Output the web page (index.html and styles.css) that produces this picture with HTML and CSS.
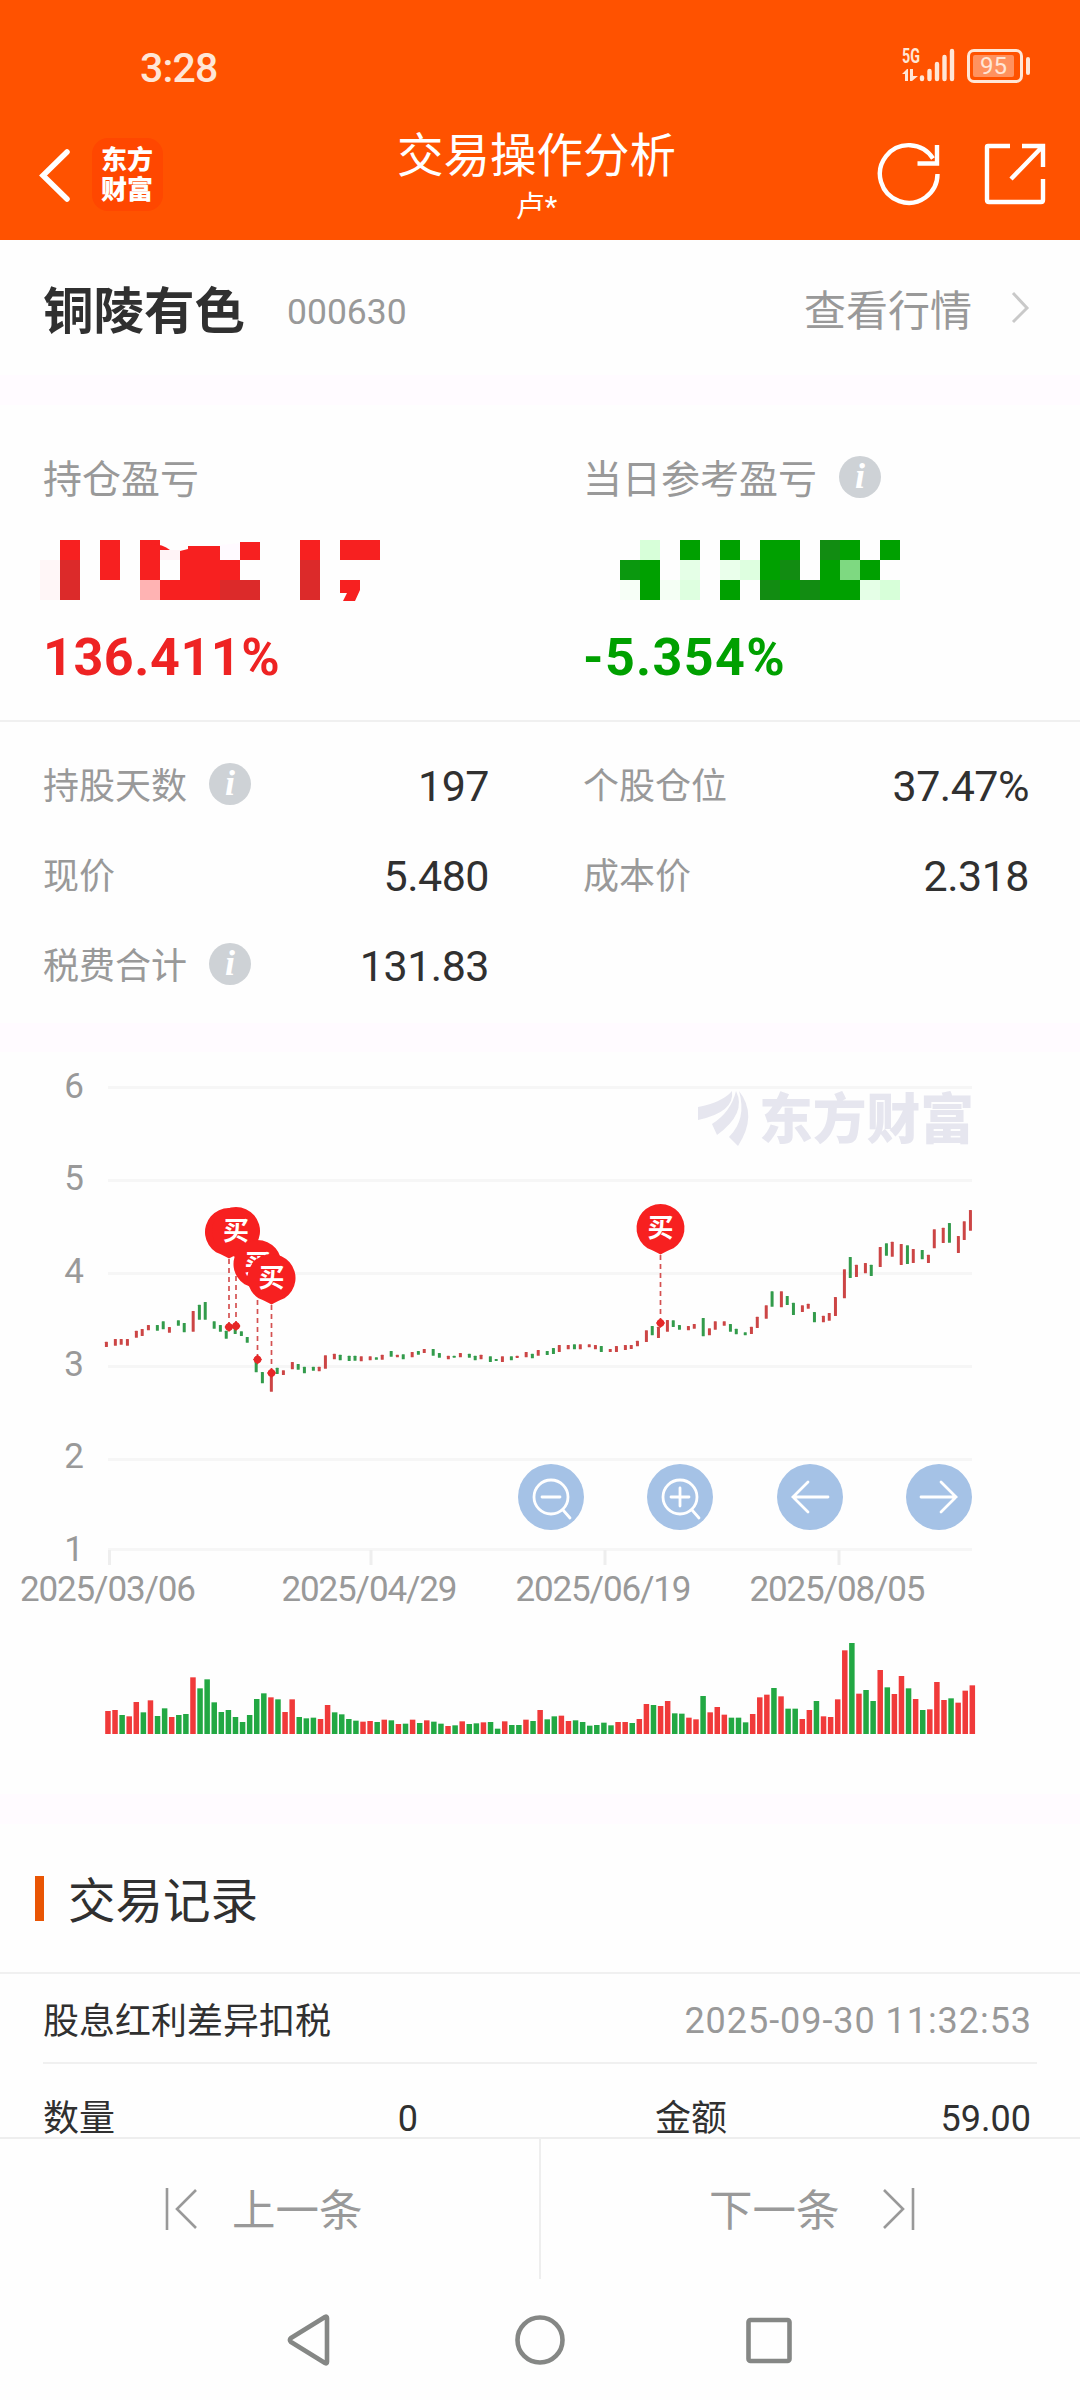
FILE: index.html
```
<!DOCTYPE html>
<html lang="zh-CN">
	<head>
		<meta charset="utf-8">
		<title>交易操作分析</title>
		<link rel="stylesheet" href="styles.css">
	</head>
	<body>
		<div class="page">
			<header class="header">
				<div class="status">
					<span class="time">3:28</span>
					<div class="status-right">
						<div class="net">
							<span>5G</span>
							<svg width="16" height="12" viewBox="0 0 16 12"><path d="M0 5 5 0H6V12H3V5ZM8 0H11V7H16L10 12H8Z" fill="#ffe6d6"/></svg>
						</div>
						<svg class="signal" width="36" height="34" viewBox="0 0 36 34" stroke="#ffe6d6" stroke-width="4.4" stroke-linecap="round"><path d="M3 29.500V31M10.500 23V31M18 16V31M25.500 9V31M33 3V31"/></svg>
						<div class="battery"><span>95</span></div>
						<i class="battery-cap"></i>
					</div>
				</div>
				<div class="nav">
					<svg class="back" width="34" height="56" viewBox="0 0 34 56"><path d="M29 4 5 27.500 29 51" fill="none" stroke="#fff" stroke-width="5.500" stroke-linecap="round"/></svg>
					<div class="logo">东方<br>财富</div>
					<div class="title">
						<h1>交易操作分析</h1>
						<p>卢*</p>
					</div>
					<svg class="refresh" width="66" height="66" viewBox="0 0 66 66" fill="none" stroke="#fff" stroke-width="4.400"><path d="M60.500 33A28.800 28.800 0 1 1 56 17.500"/><path d="M60 4V22.500H40.500"/></svg>
					<svg class="share" width="62" height="62" viewBox="0 0 62 62" fill="none" stroke="#fff" stroke-width="4.400"><path d="M26 3H4Q3 3 3 4V57Q3 59 5 59H57Q59 59 59 57V36M38 3H59V24M59 3 27 36"/></svg>
				</div>
			</header>

			<section class="stock">
				<h2>铜陵有色</h2>
				<span class="code">000630</span>
				<span class="quote">查看行情</span>
				<svg width="20" height="36" viewBox="0 0 20 36"><path d="M2 3 16 18 2 32" fill="none" stroke="#c9c9c9" stroke-width="3"/></svg>
			</section>

			<section class="profit">
				<div class="profit-item red">
					<p class="label">持仓盈亏</p>
					<svg class="mosaic" id="mosaicRed" width="360" height="62"></svg>
					<b>136.411%</b>
				</div>
				<div class="profit-item green">
					<p class="label">当日参考盈亏<i class="info">i</i></p>
					<svg class="mosaic" id="mosaicGreen" width="360" height="62"></svg>
					<b>-5.354%</b>
				</div>
			</section>

			<section class="detail">
				<div class="row"><span>持股天数<i class="info">i</i></span><em>197</em></div>
				<div class="row"><span>个股仓位</span><em>37.47%</em></div>
				<div class="row"><span>现价</span><em>5.480</em></div>
				<div class="row"><span>成本价</span><em>2.318</em></div>
				<div class="row"><span>税费合计<i class="info">i</i></span><em>131.83</em></div>
			</section>

			<section class="chart">
				<svg id="chart" width="1080" height="742" viewBox="0 1052 1080 742"></svg>
			</section>

			<section class="record">
				<h3>交易记录</h3>
				<div class="record-head"><span>股息红利差异扣税</span><time>2025-09-30 11:32:53</time></div>
				<div class="record-row">
					<span>数量</span><em class="count">0</em>
					<span class="amount">金额</span><em>59.00</em>
				</div>
			</section>

			<div class="pager">
				<div class="prev">
					<svg width="34" height="46" viewBox="0 0 34 46" fill="none" stroke="#999" stroke-width="2.600"><path d="M3 2V44M32 4 13 23 32 42"/></svg>
					<span>上一条</span>
				</div>
				<div class="next">
					<span>下一条</span>
					<svg width="34" height="46" viewBox="0 0 34 46" fill="none" stroke="#999" stroke-width="2.600"><path d="M31 2V44M2 4 21 23 2 42"/></svg>
				</div>
			</div>

			<div class="sysbar">
				<svg width="1080" height="122" viewBox="0 0 1080 122" fill="none" stroke="#858785" stroke-width="4.600" stroke-linejoin="round"><path d="M327 39V83Q327 85 325 84L291 63Q289 61 291 59L325 38Q327 37 327 39Z"/><circle cx="540" cy="61" r="22.500"/><rect x="748.500" y="41" width="41" height="41" rx="2"/></svg>
			</div>
		</div>
		<script src="chart.js"></script>
	</body>
</html>
```
FILE: styles.css
```
*{
	margin: 0;
	padding: 0;
	box-sizing: border-box;
}
body{
	width: 1080px;
	background-color: #fefefe;
	color: #303030;
	font-family: "Roboto", "Noto Sans CJK SC", sans-serif;
}
em,i{
	font-style: normal;
}
svg{
	display: block;
	flex: none;
}
.page{
	height: 2400px;
	overflow: hidden;
	display: flex;
	flex-direction: column;
}
.page > *{
	flex: none;
}
/* 顶部 */
.header{
	height: 240px;
	background-color: #ff5200;
	color: #fff;
}
.status{
	height: 134px;
	padding: 0 50px 0 140px;
	display: flex;
	justify-content: space-between;
	color: #ffe6d6;
}
.time{
	padding-top: 44px;
	font-size: 41px;
	line-height: 48px;
	font-weight: 500;
	letter-spacing: -0.8px;
}
.status-right{
	display: flex;
	align-items: flex-start;
	padding-top: 48px;
}
.net{
	width: 17px;
}
.net span{
	display: block;
	width: 25px;
	font-size: 21px;
	line-height: 16px;
	font-weight: bold;
	transform: scaleX(0.68);
	transform-origin: 0 0;
}
.net svg{
	margin-top: 5px;
}
.signal{
	margin-right: 12px;
}
.battery{
	width: 56px;
	height: 34px;
	margin-top: 1px;
	padding: 3px;
	border: 3px solid #ffe6d6;
	border-radius: 7px;
}
.battery span{
	display: block;
	width: 41px;
	height: 22px;
	border-radius: 2px;
	background-color: #ff925f;
	font-size: 24px;
	line-height: 23px;
	text-align: center;
}
.battery-cap{
	width: 4px;
	height: 18px;
	margin: 9px 0 0 3px;
	border-radius: 2px;
	background-color: #ffe6d6;
}
.nav{
	display: grid;
	grid-template-columns: 54px 71px 1fr 107px 62px;
	padding: 0 34px 0 38px;
	align-items: start;
}
.back{
	margin-top: 14px;
}
.logo{
	width: 71px;
	height: 73px;
	margin-top: 4px;
	padding: 5px 0 0 9px;
	border-radius: 16px;
	background-color: #ff4700;
	font-family: "Noto Sans CJK SC", sans-serif;
	font-size: 26px;
	font-weight: 900;
	line-height: 30px;
}
.title{
	margin-left: 33px;
	text-align: center;
}
.title h1{
	font-size: 46.5px;
	line-height: 50px;
	font-weight: normal;
	margin-top: -3px;
}
.title p{
	font-size: 29px;
	line-height: 40px;
	margin-top: 6px;
}
.refresh{
	margin-top: 7px;
}
.share{
	margin-top: 9px;
}
/* 股票 */
.stock{
	height: 135px;
	padding: 8px 49px 0 43px;
	display: flex;
	align-items: center;
}
.stock h2{
	font-size: 50.5px;
	line-height: 60px;
}
.code{
	margin-left: 42px;
	font-size: 35.5px;
	color: #999;
}
.quote{
	margin-left: auto;
	margin-right: 39px;
	font-size: 42px;
	line-height: 60px;
	color: #999;
}
.stock svg{
	margin-top: -7px;
}
/* 盈亏 */
.profit{
	height: 347px;
	border-top: 30px solid #fffbff;
	border-bottom: 2px solid #f0f0f0;
	display: grid;
	grid-template-columns: 540px 540px;
}
.profit-item{
	padding: 44px 0 0 43px;
}
.label{
	display: flex;
	align-items: center;
	height: 60px;
	padding-bottom: 6px;
	font-size: 39px;
	color: #999;
}
.info{
	width: 42px;
	height: 42px;
	margin-top: 1px;
	margin-left: 22px;
	border-radius: 50%;
	background-color: #ced2d6;
	color: #fff;
	font: italic bold 36px/40px "Liberation Serif", serif;
	text-align: center;
}
.mosaic{
	margin: 31px 0 0 -3px;
}
.profit b{
	display: block;
	margin-top: 22px;
	font-size: 52px;
	line-height: 68px;
	letter-spacing: 0.6px;
}
.red b{
	color: #ee2323;
}
.profit .green b{
	color: #00a000;
	letter-spacing: 1.4px;
}
/* 明细 */
.detail{
	height: 301px;
	padding: 19px 0 0;
	display: grid;
	grid-template-columns: 489px 540px;
	grid-auto-rows: 90px;
}
.row{
	display: flex;
	justify-content: space-between;
	align-items: center;
	padding-left: 43px;
}
.row:nth-child(even){
	padding-left: 94px;
}
.row span{
	display: flex;
	align-items: center;
	padding-bottom: 6px;
	font-size: 36px;
	color: #999;
}
.row em{
	font-size: 43px;
	letter-spacing: -0.5px;
}
/* 图表 */
.chart{
	height: 771px;
	border-top: 29px solid #fffbff;
}
.axis{
	font-size: 35px;
	fill: #999;
}
.pin{
	font-size: 26px;
	font-weight: bold;
	fill: #fff;
}
.watermark{
	font-size: 54px;
	font-weight: 900;
	fill: #e6e6ef;
}
/* 记录 */
.record{
	height: 343px;
	overflow: hidden;
	border-top: 30px solid #fffbff;
}
.record h3{
	display: flex;
	align-items: center;
	height: 150px;
	padding: 0 0 2px 35px;
	border-bottom: 2px solid #f0f0f0;
	font-size: 47.5px;
	font-weight: normal;
}
.record h3::before{
	content: "";
	width: 9px;
	height: 45px;
	margin-top: 2px;
	margin-right: 24px;
	background-color: #e95504;
}
.record-head{
	height: 90px;
	margin-left: 43px;
	margin-right: 43px;
	padding-right: 5px;
	border-bottom: 2px solid #f0f0f0;
	display: flex;
	justify-content: space-between;
	align-items: center;
	font-size: 36px;
}
.record-head time{
	padding-top: 6px;
	letter-spacing: 0.95px;
	color: #999;
}
.record-row{
	height: 73px;
	padding: 37px 49px 0 43px;
	display: grid;
	grid-template-columns: 200px 175px 400px 1fr;
	align-items: start;
	font-size: 36px;
	line-height: 36px;
}
.record-row em{
	text-align: right;
}
.amount{
	padding-left: 237px;
}
/* 翻页 */
.pager{
	height: 142px;
	border-top: 2px solid #eee;
	display: grid;
	grid-template-columns: 541px 539px;
	font-size: 43.5px;
	color: #999;
}
.pager div{
	display: flex;
	align-items: center;
}
.pager span{
	padding-bottom: 3px;
}
.prev{
	padding-left: 164px;
	border-right: 2px solid #eee;
}
.prev span{
	margin-left: 34px;
}
.next{
	padding-left: 168px;
}
.next span{
	margin-right: 42px;
}
.sysbar{
	height: 122px;
}
```
FILE: chart.js
```
function $(id){
	return document.getElementById(id);
}

/* 打码的金额：x,y,宽,高,颜色 */
function mosaic(id, cells){
	$(id).innerHTML = cells.map(function(c){
		return '<rect x="' + c[0]*20 + '" y="' + c[1]*20 + '" width="' + (c[2]*20) + '" height="' + c[3]*20 + '" fill="' + c[4] + '"/>';
	}).join("");
}
var R = "#f72020", D = "#dc2a2a", G = "#00a000", K = "#128c12";
mosaic("mosaicRed", [
	[0,1,1,2,"#fff6f7"],[1,0,1,1,R],[1,1,1,2,D],[3,0,1,2,R],[5,0,1,2,R],[5,2,1,1,"#ffb3b3"],
	[6,0.5,1,0.5,"#fff3f6"],[6,2,3,1,R],[7,0.3,2,1.7,R],[9,1,1,1,R],[9,2,2,1,D],
	[10,0.1,1,0.9,R],[13,0,1,1,R],[13,1,1,2,D],[15,0,2,1,R]
]);
$("mosaicRed").innerHTML += '<path d="M111 4Q123 4 130 10H111ZM300 40H320V50L315 61H303L307 53H300Z" fill="#f72020"/><path d="M180 5 200 3V20H180Z" fill="#fffaff"/><path d="M140 5H148V9L140 11Z" fill="#fefefe"/>';
mosaic("mosaicGreen", [
	[2,1,1,1,"#0b980f"],[2,2,1,1,"#f7fff7"],[3,0,1,1,"#d7ffd9"],[3,1,1,2,G],[4,2,1,1,"#f5fff5"],[5,0,1,1,G],
	[5,1,1,1,"#e5ffe7"],[5,2,1,1,"#deffe0"],[7,0,1,1,G],[7,1,1,1,"#eaffeb"],[7,2,1,1,G],[8,1,1,1,"#deffe0"],
	[9,0,2,1,G],[9,1,1,1,G],[10,1,1,1,K],[9,2,1,1,K],[10,2,1,1,G],[11,2,1,1,K],[12,0,1,1,K],[12,1,1,1,G],
	[12,2,2,1,G],[13,0,1,1,G],[13,1,1,1,"#7ed981"],[14,1,1,1,G],[14,2,1,1,"#e5ffe7"],[15,0,1,1,G],[15,2,1,1,"#d7ffd9"]
]);

var html = "";

/* 水印 */
html += '<g fill="#e6e6ef"><path d="M698 1107Q723 1102 732 1091Q735 1112 698 1120ZM712 1124Q731 1112 736 1091Q747 1113 717 1135ZM739 1091Q758 1115 738 1146Q734 1142 729 1137Q747 1119 739 1091Z"/></g>';
html += '<text class="watermark" x="759" y="1139" textLength="215" lengthAdjust="spacingAndGlyphs">东方财富</text>';

/* 坐标轴 */
var ys = [1087.5,1180.5,1273.5,1366.5,1459.5,1549.5];
for(var i = 0;i < ys.length;i++){
	html += '<rect x="108" y="' + (ys[i]-1.5) + '" width="864" height="3" fill="#f6f6f6"/>';
	html += '<text class="axis" x="84" y="' + [1098,1190,1283,1376,1468,1561][i] + '" text-anchor="end">' + (6-i) + '</text>';
}
var dates = [[109,"2025/03/06"],[370.5,"2025/04/29"],[604.5,"2025/06/19"],[838.5,"2025/08/05"]];
dates.forEach(function(d){
	html += '<rect x="' + (d[0]-1) + '" y="1550" width="3" height="15" fill="#eee"/>';
	html += '<text class="axis" x="' + (d[0]-1) + '" y="1601" text-anchor="middle" textLength="176">' + d[1] + '</text>';
});

/* K线：x,上沿,下沿,颜色 (三倍坐标) */
var left = "309,845,861,r 335,837,857,r 352,837,854,r 370,837,857,r 396,812,833,r 413,807,828,r 431,795,811,r 457,795,812,g 474,784,808,g 492,801,818,r 518,781,797,g 535,789,817,g 561,753,815,r 579,734,779,g 596,726,779,g 622,784,806,g 640,795,815,g 657,812,836,g 683,803,822,g 701,814,828,g 718,831,848,g 744,905,937,g 762,936,970,g 788,942,995,r 805,923,942,g 823,931,945,r 849,906,928,r 866,912,929,g 884,920,940,g 910,920,932,g 927,920,934,r 945,886,926,r 971,881,898,r 988,884,901,g 1014,887,903,g 1031,887,902,g 1049,889,904,r 1075,889,901,r 1093,892,899,g 1110,884,899,r 1136,873,890,g 1154,884,892,r 1171,883,898,g 1197,876,892,r 1215,873,884,g 1232,867,879,r 1258,867,887,g 1276,879,893,g 1302,887,898,r 1319,887,893,g 1337,879,892,r 1363,881,893,g 1380,887,901,g 1397,884,898,r 1424,889,906,g 1441,897,903,g 1459,889,906,r 1485,889,901,g 1502,887,894,r 1528,876,892,r 1546,881,895,g 1563,870,887,r";
var right = "21,873,885,g 39,864,882,g 56,855,876,r 82,855,868,r 100,853,868,g 117,853,868,r 143,853,862,r 161,855,868,r 178,858,876,g 204,867,876,r 222,858,876,r 248,855,870,r 265,855,867,r 283,842,859,r 309,811,846,r 326,798,826,g 344,800,834,r 370,780,815,r 387,781,801,g 405,795,809,g 431,798,811,r 448,792,806,r 474,774,829,g 492,805,826,r 509,784,809,r 535,784,797,r 553,792,815,g 570,806,823,g 596,817,826,g 614,800,822,r 631,770,804,r 657,736,776,r 674,694,740,g 701,694,742,r 718,708,735,g 736,728,765,g 762,736,756,r 779,731,746,r 797,756,787,g 823,767,787,r 840,759,782,r 858,711,768,r 884,628,715,r 901,591,654,g 919,614,651,r 945,609,640,r 962,614,648,g 988,561,621,r 1006,550,587,g 1023,545,590,r 1049,552,615,r 1067,556,612,g 1084,567,609,r 1110,570,598,g 1128,584,609,r 1145,508,565,r 1171,503,549,r 1189,489,548,g 1215,528,579,r 1232,484,540,r 1250,450,512,r";
function candles(str, offset){
	str.split(" ").forEach(function(item){
		var c = item.split(",");
		html += '<rect x="' + (offset + c[0]/2.904 - 1.5) + '" y="' + (1060 + c[1]/3) + '" width="3" height="' + (c[2]-c[1])/3 + '" rx="0.5" fill="' + (c[3] == "r" ? "#cc4545" : "#329b4b") + '"/>';
	});
}
candles(left, 0);
candles(right, 540);

/* 买点：x,气泡顶,落点 */
var pins = [[229,1208,1327],[236,1207,1326],[257.5,1240,1359.5],[271.5,1254,1373],[660.5,1204,1323]];
pins.forEach(function(p){
	html += '<path d="M' + p[0] + ' ' + (p[1]+51) + 'V' + p[2] + '" stroke="#d45151" stroke-width="1.700" stroke-dasharray="5 4"/>';
	html += '<path d="M' + p[0] + ' ' + (p[2]-5) + 'l4.500 5l-4.500 5l-4.500 -5Z" fill="#e62828"/>';
	html += '<circle cx="' + p[0] + '" cy="' + p[2] + '" r="3.800" fill="#e62828"/>';
});
pins.forEach(function(p){
	var x = p[0], c = p[1] + 24;
	html += '<path d="M' + x + ' ' + (c+26.5) + 'Q' + (x+4) + ' ' + (c+24) + ' ' + (x+13) + ' ' + (c+20.2) + 'A24 24 0 1 0 ' + (x-13) + ' ' + (c+20.2) + 'Q' + (x-4) + ' ' + (c+24) + ' ' + x + ' ' + (c+26.5) + 'Z" fill="#f72020"/>';
	if(p[0] != 229){
		html += '<text class="pin" x="' + x + '" y="' + (c+9) + '" text-anchor="middle">买</text>';
	}
});

/* 缩放与平移按钮 */
var icons = [
	"M-9 0H9M12 13 19 21",
	"M-9 0H9M0 -9V9M12 13 19 21",
	"M18 0H-17M-2 -15 -17 0 -2 15",
	"M-18 0H17M2 -15 17 0 2 15"
];
[551,680,810,939].forEach(function(x, i){
	html += '<g transform="translate(' + x + ' 1497)" fill="none" stroke="#fff" stroke-width="2.800" stroke-linecap="round"><circle r="33" fill="#a5c2e6" stroke="none"/>';
	if(i < 2){
		html += '<circle r="17"/>';
	}
	html += '<path d="' + icons[i] + '"/></g>';
});

/* 成交量 */
var colors = "rrgrrgrggrggrgggggggggg" + "rgrrgggrrggggrrgrgrgrgrggrgrggrggrggrgr" + "ggrrggggggrrgrrgrrggrrgrrrgggrrrgrggrrgrrrrgrggrgrrgrgrrrgrrr";
var tops = [873,870,885,889,846,877,841,888,865,891,885,882,772,805,778,847,876,870,891,906,885,837,820,832,838,876,838,891,895,893,897,855,877,883,897,902,905,903,906,899,901,912,911,899,909,901,905,911,918,916,904,912,910,907,906,926,904,915,915,899,903,870,898,889,887,903,901,906,917,915,908,916,906,906,909,897,852,855,858,843,880,881,893,898,828,877,861,884,893,893,907,882,832,824,804,829,866,866,897,870,843,889,891,838,691,669,821,810,843,750,802,822,768,805,837,870,868,786,840,835,848,812,796];
for(var i = 0;i < tops.length;i++){
	var h = (942-tops[i])/3;
	html += '<rect x="' + (105.2 + i*7.085) + '" y="' + (1734-h) + '" width="5.500" height="' + h + '" fill="' + (colors[i] == "r" ? "#f03a3a" : "#22a843") + '"/>';
}

$("chart").innerHTML = html;
```
